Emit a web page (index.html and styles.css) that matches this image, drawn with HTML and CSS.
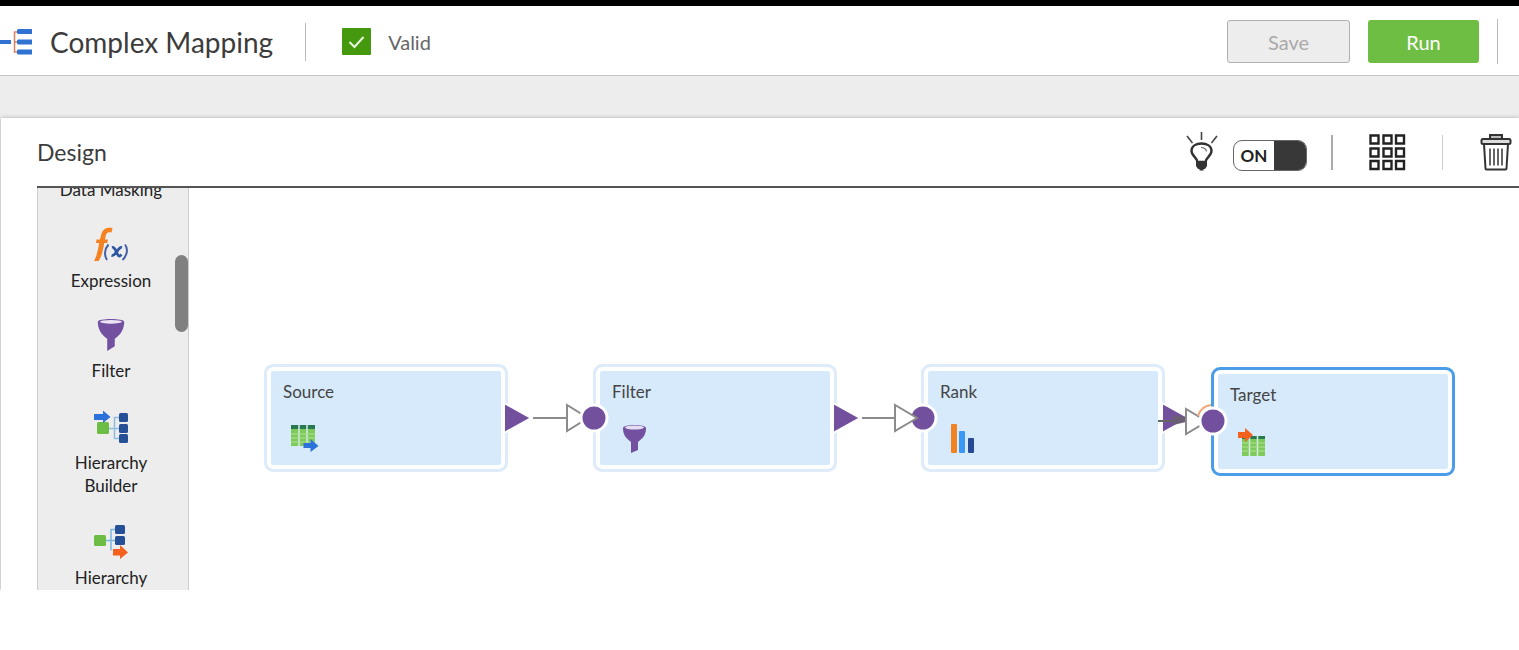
FILE: index.html
```html
<!DOCTYPE html>
<html lang="en">
<head>
<meta charset="utf-8">
<title>Complex Mapping</title>
<link rel="stylesheet" href="styles.css">
</head>
<body>
<div class="app">
  <header class="topbar">
    <svg class="logo" width="32" height="26" viewBox="0 0 32 26" aria-hidden="true">
      <path d="M18 3h-3.500v20H18M14 13h4" fill="none" stroke="#e0805e" stroke-width="1.500"/>
      <path d="M0 11h11v4H0zM18 0h14v5H18l-1-1V1zM18 10.500h14v5H18l-1-1v-3zM18 20.500h14v5H18l-1-1v-3z" fill="#2f72d2"/>
    </svg>
    <h1 class="title">Complex Mapping</h1>
    <div class="status">
      <svg width="29" height="27" viewBox="0 0 29 27" aria-hidden="true">
        <rect width="29" height="27" rx="1" fill="#45990f"/>
        <path d="M7.500 14l5 5 9-10" fill="none" stroke="#e9f8dc" stroke-width="2"/>
      </svg>
      <span>Valid</span>
    </div>
    <div class="actions">
      <button class="btn btn-save" type="button" disabled>Save</button>
      <button class="btn btn-run" type="button">Run</button>
      <span class="actions-end"></span>
    </div>
  </header>

  <main class="panel">
    <div class="panel-head">
      <h2 class="panel-title">Design</h2>
      <div class="tools">
        <svg class="bulb" width="34" height="42" viewBox="0 0 34 42" aria-hidden="true">
          <path d="M2 5l5.500 7M16.500 1v8M32 5l-5.500 7" fill="none" stroke="#444" stroke-width="1.600"/>
          <path d="M12.500 31c0-4-6-6-6-11C6.500 15 11 12.500 16.500 12.500S26.500 15 26.500 20c0 5-6 7-6 11z" fill="#fff" stroke="#333" stroke-width="2.400"/>
          <path d="M16 16.500c3 0 5 1 5.500 4" fill="none" stroke="#666" stroke-width="1.200"/>
          <path d="M11 30h11v5l-2 3h-1.500v1.500h-4V38H13l-2-3z" fill="#333"/>
        </svg>
        <label class="switch">
          <input class="switch-input" type="checkbox" role="switch" checked>
          <span class="switch-text">ON</span><span class="switch-knob"></span>
        </label>
        <span class="rule rule-dark"></span>
        <button class="icon-btn" type="button" aria-label="Arrange">
          <svg width="37" height="37" viewBox="0 0 37 37" fill="#fff" stroke="#222" stroke-width="2.400">
            <path d="M1.500 1.500h8v8h-8zM14.500 1.500h8v8h-8zM27 1.500h8v8h-8zM1.500 14.500h8v8h-8zM14.500 14.500h8v8h-8zM27 14.500h8v8h-8zM1.500 27h8v8h-8zM14.500 27h8v8h-8zM27 27h8v8h-8z"/>
          </svg>
        </button>
        <span class="rule"></span>
        <button class="icon-btn trash" type="button" aria-label="Delete">
          <svg width="32" height="38" viewBox="0 0 32 38" fill="none" stroke="#333" stroke-width="2">
            <path d="M10 5.500V2h12v3.500" fill="#bbb"/>
            <rect x="1.500" y="6" width="29" height="5" rx="1.500" fill="#ddd"/>
            <path d="M4 11l1.500 24.500q0 1 1 1h19q1 0 1-1L28 11"/>
            <path d="M10 15.500v17M14 15.500v17M18 15.500v17M22 15.500v17" stroke-width="1.500"/>
          </svg>
        </button>
      </div>
    </div>

    <div class="workspace">
      <aside class="palette">
        <ul class="palette-list">
          <li class="item"><span>Data Masking</span></li>
          <li class="item">
            <svg width="36" height="35" viewBox="0 0 36 35" aria-hidden="true">
              <path d="M1 34C5 28 6 14 8 8.500 9.500 2 13 0 19.500 1l-1 4.500C14 4.500 13 6 12 12.500h3l-.8 3.500h-3C10 24 8.500 30 5.500 34zM3.500 12.500h5V16H3z" fill="#f58220"/>
              <path d="M15.500 17.500c-4 4.500-4.500 11-1.500 15.500M32 17.500c3.500 4.500 2 11-2.500 15.500" fill="none" stroke="#4560a8" stroke-width="2"/>
              <path d="M19 20.500c4-1.500 4.500 9 7.500 8.500 1 0 1.500-1 2-1.500M29 20.500c-4-1-6 9-10.500 8" fill="none" stroke="#2e559f" stroke-width="2.800"/>
            </svg>
            <span>Expression</span>
          </li>
          <li class="item">
            <svg width="30" height="34" viewBox="0 0 30 36" aria-hidden="true">
              <path d="M1 4C1 0 29 0 29 4c0 8-4 14-10 18v8l-8 5V22C5 18 1 12 1 4z" fill="#7350a0"/>
              <ellipse cx="15" cy="4" rx="11.500" ry="2" fill="#eee6f5"/>
            </svg>
            <span>Filter</span>
          </li>
          <li class="item">
            <svg width="36" height="36" viewBox="0 -2 36 36" aria-hidden="true">
              <path d="M15 18.500h12M27 7.500h-5.500v21H27" fill="none" stroke="#8fbce0" stroke-width="1.500"/>
              <g fill="#254f96"><rect x="26" y="3" width="9" height="9" rx="1.500"/><rect x="26" y="14" width="9" height="9" rx="1.500"/><rect x="26" y="24" width="9" height="9" rx="1.500"/></g>
              <rect x="4" y="12" width="12" height="12" rx="1.500" fill="#6cbd45"/>
              <path d="M1 4h9V0.500l7.500 6.500-7.500 6V10H1z" fill="#2b71d9"/>
            </svg>
            <span>Hierarchy<br>Builder</span>
          </li>
          <li class="item">
            <svg width="36" height="36" viewBox="0 -2 36 36" aria-hidden="true">
              <path d="M12 15.500h12M24 4.500h-6v21" fill="none" stroke="#7db5e0" stroke-width="1.500"/>
              <g fill="#254f96"><rect x="22" y="0" width="10" height="9" rx="1.500"/><rect x="22" y="11" width="10" height="9" rx="1.500"/></g>
              <rect x="1" y="10" width="12" height="11" rx="1.500" fill="#6cbd45"/>
              <path d="M20 24h7v-4l8 7.500-8 6.500v-3.500h-7z" fill="#f4611e"/>
            </svg>
            <span>Hierarchy</span>
          </li>
        </ul>
        <span class="thumb"></span>
      </aside>

      <section class="canvas" aria-label="Mapping canvas">
        <div class="node source">
          <span class="node-name">Source</span>
          <svg class="node-icon" width="32" height="30" viewBox="0 0 32 30" aria-hidden="true">
            <path d="M2 3h24v20H2z" fill="#7ecb5b"/>
            <path d="M2 2h24v4H2z" fill="#287850"/>
            <path d="M10 2v21M18 2v21" stroke="#d7ecef" stroke-width="1.500"/>
            <path d="M2 11h24M2 15h24M2 19h24" stroke="#b0e093"/>
            <path d="M14.500 20h7v-4l8 7-8 6v-4h-7z" fill="#2b71d9"/>
          </svg>
        </div>
        <div class="node filter">
          <span class="node-name">Filter</span>
          <svg class="node-icon" width="32" height="30" viewBox="0 0 32 30" aria-hidden="true">
            <path d="M5 5c0-4 23-4 23 0 0 7-3 10-8 14v8l-7 3V19C8 15 5 12 5 5z" fill="#7350a0"/>
            <ellipse cx="16.500" cy="4.500" rx="9.500" ry="2" fill="#e4dcf1"/>
          </svg>
        </div>
        <div class="node rank">
          <span class="node-name">Rank</span>
          <svg class="node-icon" width="32" height="30" viewBox="0 0 32 30" aria-hidden="true">
            <rect x="5" y="1" width="6" height="29" rx="1" fill="#f08322"/>
            <rect x="13" y="8" width="6" height="22" rx="1" fill="#3b99f5"/>
            <rect x="22" y="15" width="6" height="15" rx="1" fill="#264b94"/>
          </svg>
        </div>
        <div class="node target">
          <span class="node-name">Target</span>
          <svg class="node-icon" width="32" height="30" viewBox="0 0 32 30" aria-hidden="true">
            <path d="M6 10h23v20H6z" fill="#7ecb5b"/>
            <path d="M6 10h23v3H6z" fill="#287850"/>
            <path d="M13.500 10v20M21.500 10v20" stroke="#d7ecef" stroke-width="1.500"/>
            <path d="M6 17h23M6 21h23M6 25h23" stroke="#b0e093"/>
            <path d="M2 6h7V2l8 7-8 7v-4H2z" fill="#f4611e"/>
          </svg>
        </div>
        <svg class="links" width="1266" height="402" viewBox="0 0 1266 402" aria-hidden="true">
          <g fill="#fff" stroke="#8b8b8b" stroke-width="2">
            <path d="M344 230h34M378 217v26l21-13z"/>
            <path d="M673 230h34"/>
          </g>
          <g fill="#73509d" stroke="#fff" stroke-width="2">
            <path d="M315 215l27 15-27 15z"/>
            <path d="M644 215l27 15-27 15z"/>
            <path d="M973 215l27 15-27 15z"/>
            <circle cx="405" cy="230" r="13" stroke-width="3"/>
            <circle cx="734" cy="230" r="13" stroke-width="3"/>
          </g>
          <path d="M706 217v26l22-13z" fill="#fff" stroke="#8b8b8b" stroke-width="2"/>
          <path d="M969 233h28" fill="none" stroke="#666" stroke-width="2"/>
          <path d="M984 227l13 2v5l-13 3z" fill="#6b5d73"/>
          <path d="M997 221v25l21-12.500z" fill="#fff" stroke="#8b8b8b" stroke-width="2"/>
          <path d="M1009 228q3-10 13-11" fill="none" stroke="#f2a571" stroke-width="2"/>
          <circle cx="1024" cy="233" r="13" fill="#73509d" stroke="#fff" stroke-width="3"/>
        </svg>
      </section>
    </div>
  </main>
</div>
</body>
</html>
```
FILE: styles.css
```css
* { box-sizing: border-box; }
body {
  margin: 0;
  background: #fff;
  color: #3c3c3c;
  font-family: Lato, "Liberation Sans", sans-serif;
}
h1, h2, ul { margin: 0; padding: 0; font-weight: 400; }
button { font: inherit; padding: 0; border: 0; background: none; cursor: pointer; }
svg { display: block; flex: none; }

.app { background: #ededed; border-top: 6px solid #000; }

.topbar {
  display: flex;
  align-items: center;
  height: 70px;
  padding-top: 2px;
  background: #fff;
  border-bottom: 1px solid #c4c4c4;
}
.logo { margin-right: 18px; }
.title { font-size: 28px; line-height: 36px; }
.status {
  display: flex;
  align-items: center;
  gap: 17px;
  height: 38px;
  margin-left: 32px;
  padding-left: 36px;
  border-left: 1px solid #bbb;
  color: #666;
  font-size: 20px;
}
.actions { display: flex; align-items: center; gap: 18px; margin-left: auto; padding-right: 21px; }
.btn { height: 43px; border-radius: 3px; font-size: 20px; }
.btn-save { width: 123px; border: 1px solid #b0b0b0; background: #ededed; color: #aaa; }
.btn-run { width: 111px; background: #6fbe44; color: #fff; }
.actions-end { width: 1px; height: 45px; background: #bbb; }

.panel {
  margin: 42px 0 0 1px;
  padding-left: 36px;
  background: #fff;
  box-shadow: 0 0 4px #aaa;
}
.panel-head {
  display: flex;
  align-items: center;
  justify-content: space-between;
  height: 70px;
  border-bottom: 2px solid #555;
}
.panel-title { font-size: 23px; }
.tools { display: flex; align-items: center; padding-right: 7px; }
.bulb { margin-right: 14px; }
.switch {
  position: relative;
  display: flex;
  align-items: center;
  width: 74px;
  height: 31px;
  margin-top: 6px;
  overflow: hidden;
  border: 1px solid #666;
  border-radius: 9px;
  color: #222;
  font-size: 17px;
  font-weight: 700;
}
.switch-input { position: absolute; inset: 0; margin: 0; opacity: 0; }
.switch-text { flex: 1; text-align: center; }
.switch-knob { width: 32px; height: 100%; background: #383838; }
.rule { width: 1px; height: 35px; margin: 0 25px 0 36px; background: #ccc; }
.rule-dark { width: 2px; margin-left: 24px; margin-right: 36px; background: #aaa; }
.icon-btn { display: block; }
.trash { margin-left: 12px; }

.workspace { display: flex; height: 402px; }
.palette {
  position: relative;
  flex: none;
  width: 152px;
  overflow: hidden;
  border: solid #ccc;
  border-width: 0 1px;
  background: #ededed;
}
.palette-list { display: flex; flex-direction: column; gap: 26px; margin-top: -10px; list-style: none; }
.item {
  display: flex;
  flex-direction: column;
  align-items: center;
  gap: 7px;
  padding-right: 4px;
  text-align: center;
  font-size: 17px;
  line-height: 23px;
  color: #222;
}
.thumb { position: absolute; top: 67px; right: 0; width: 13px; height: 77px; border-radius: 7px; background: #808080; }

.canvas { position: relative; flex: 1; overflow: hidden; }
.links { position: absolute; top: 0; left: 0; }
.node {
  position: absolute;
  top: 176px;
  width: 244px;
  height: 108px;
  display: flex;
  flex-direction: column;
  align-items: flex-start;
  gap: 20px;
  padding: 13px 12px;
  border: 3px solid #deebf8;
  border-radius: 9px;
  background: #d6eafb;
  box-shadow: inset 0 0 0 4px #fff;
}
.node-name { margin-left: 4px; font-size: 17px; line-height: 23px; color: #444; }
.node-icon { margin-left: 10px; }
.source { left: 75px; }
.filter { left: 404px; }
.rank { left: 732px; }
.target { left: 1022px; top: 179px; height: 109px; border-color: #4c9de8; }
```
